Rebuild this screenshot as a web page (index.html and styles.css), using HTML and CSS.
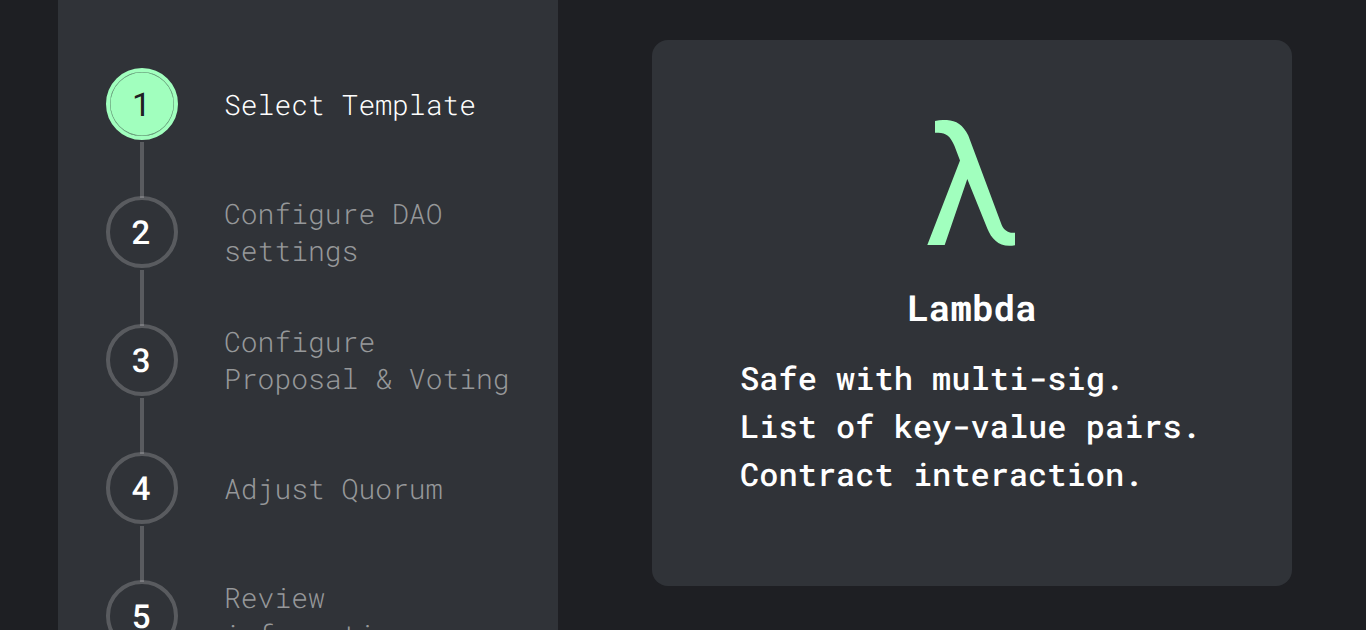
FILE: index.html
```html
<!DOCTYPE html>
<html lang="en">
<head>
    <meta charset="UTF-8">
    <title>Create DAO</title>
    <link rel="stylesheet" href="styles.css">
</head>
<body>
<div class="page">
    <ul class="stepper">
        <li class="step active">
            <span class="circle">1</span>
            <span class="label">Select Template</span>
        </li>
        <li class="line"></li>
        <li class="step">
            <span class="circle">2</span>
            <span class="label">Configure DAO settings</span>
        </li>
        <li class="line"></li>
        <li class="step">
            <span class="circle">3</span>
            <span class="label">Configure Proposal &amp; Voting</span>
        </li>
        <li class="line"></li>
        <li class="step">
            <span class="circle">4</span>
            <span class="label">Adjust Quorum</span>
        </li>
        <li class="line"></li>
        <li class="step">
            <span class="circle">5</span>
            <span class="label">Review information</span>
        </li>
    </ul>
    <div class="card">
        <svg class="lambda" width="90" height="128" viewBox="0 0 90 128">
            <path d="M8 1C24 -2 34 1 41.3 15.5L74.7 105C77 110 81 113.5 88 112.7V125.2C73 128 65 120 60.3 108.5L40.3 59L17.7 125H0.3L33 40.5L27.5 26C23 15 18 11.8 8 12.8Z"/>
        </svg>
        <h2>Lambda</h2>
        <p>Safe with multi-sig.<br>List of key-value pairs.<br>Contract interaction.</p>
    </div>
</div>
</body>
</html>
```

FILE: styles.css
```css
*{
    margin:0;
    padding:0;
    box-sizing:border-box;
}
body{
    background:#1e1f23;
    color:#fff;
    font-family:"Roboto Mono","DejaVu Sans Mono",monospace;
    text-rendering:geometricPrecision;
    overflow:hidden;
}
.page{
    display:flex;
    align-items:flex-start;
    height:630px;
    padding-left:58px;
    overflow:hidden;
}
.stepper{
    width:500px;
    min-height:630px;
    padding:68px 40px 0 48px;
    background:#303338;
    list-style:none;
    flex-shrink:0;
}
.step{
    display:flex;
    align-items:center;
    height:72px;
}
.circle{
    display:flex;
    align-items:center;
    justify-content:center;
    flex-shrink:0;
    width:72px;
    height:72px;
    padding:0 1px 3px 0;
    border:4px solid rgba(255,255,255,.2);
    border-radius:50%;
    font-size:33px;
    font-weight:500;
}
.label{
    margin-left:46px;
    font-size:28px;
    font-weight:300;
    line-height:37px;
    color:#96989a;
}
.active .circle{
    background:#a1ffbe;
    background-clip:padding-box;
    border-color:#a1ffbe;
    box-shadow:inset 0 0 0 .5px #5c8a6c;
    color:#1e2023;
    font-weight:400;
}
.active .label{
    color:#fff;
}
.line{
    width:4px;
    height:56px;
    margin:2px 0 -2px 34px;
    background:rgba(255,255,255,.2);
}
.card{
    display:flex;
    flex-direction:column;
    align-items:center;
    width:640px;
    height:546px;
    margin:40px 0 0 94px;
    padding-top:80px;
    background:#303338;
    border-radius:16px;
}
.lambda{
    fill:#a1ffbe;
}
.card h2{
    margin-top:35px;
    font-size:36px;
    font-weight:700;
    line-height:48px;
}
.card p{
    margin-top:23px;
    padding-right:3px;
    font-size:32px;
    font-weight:500;
    line-height:48px;
}
```
